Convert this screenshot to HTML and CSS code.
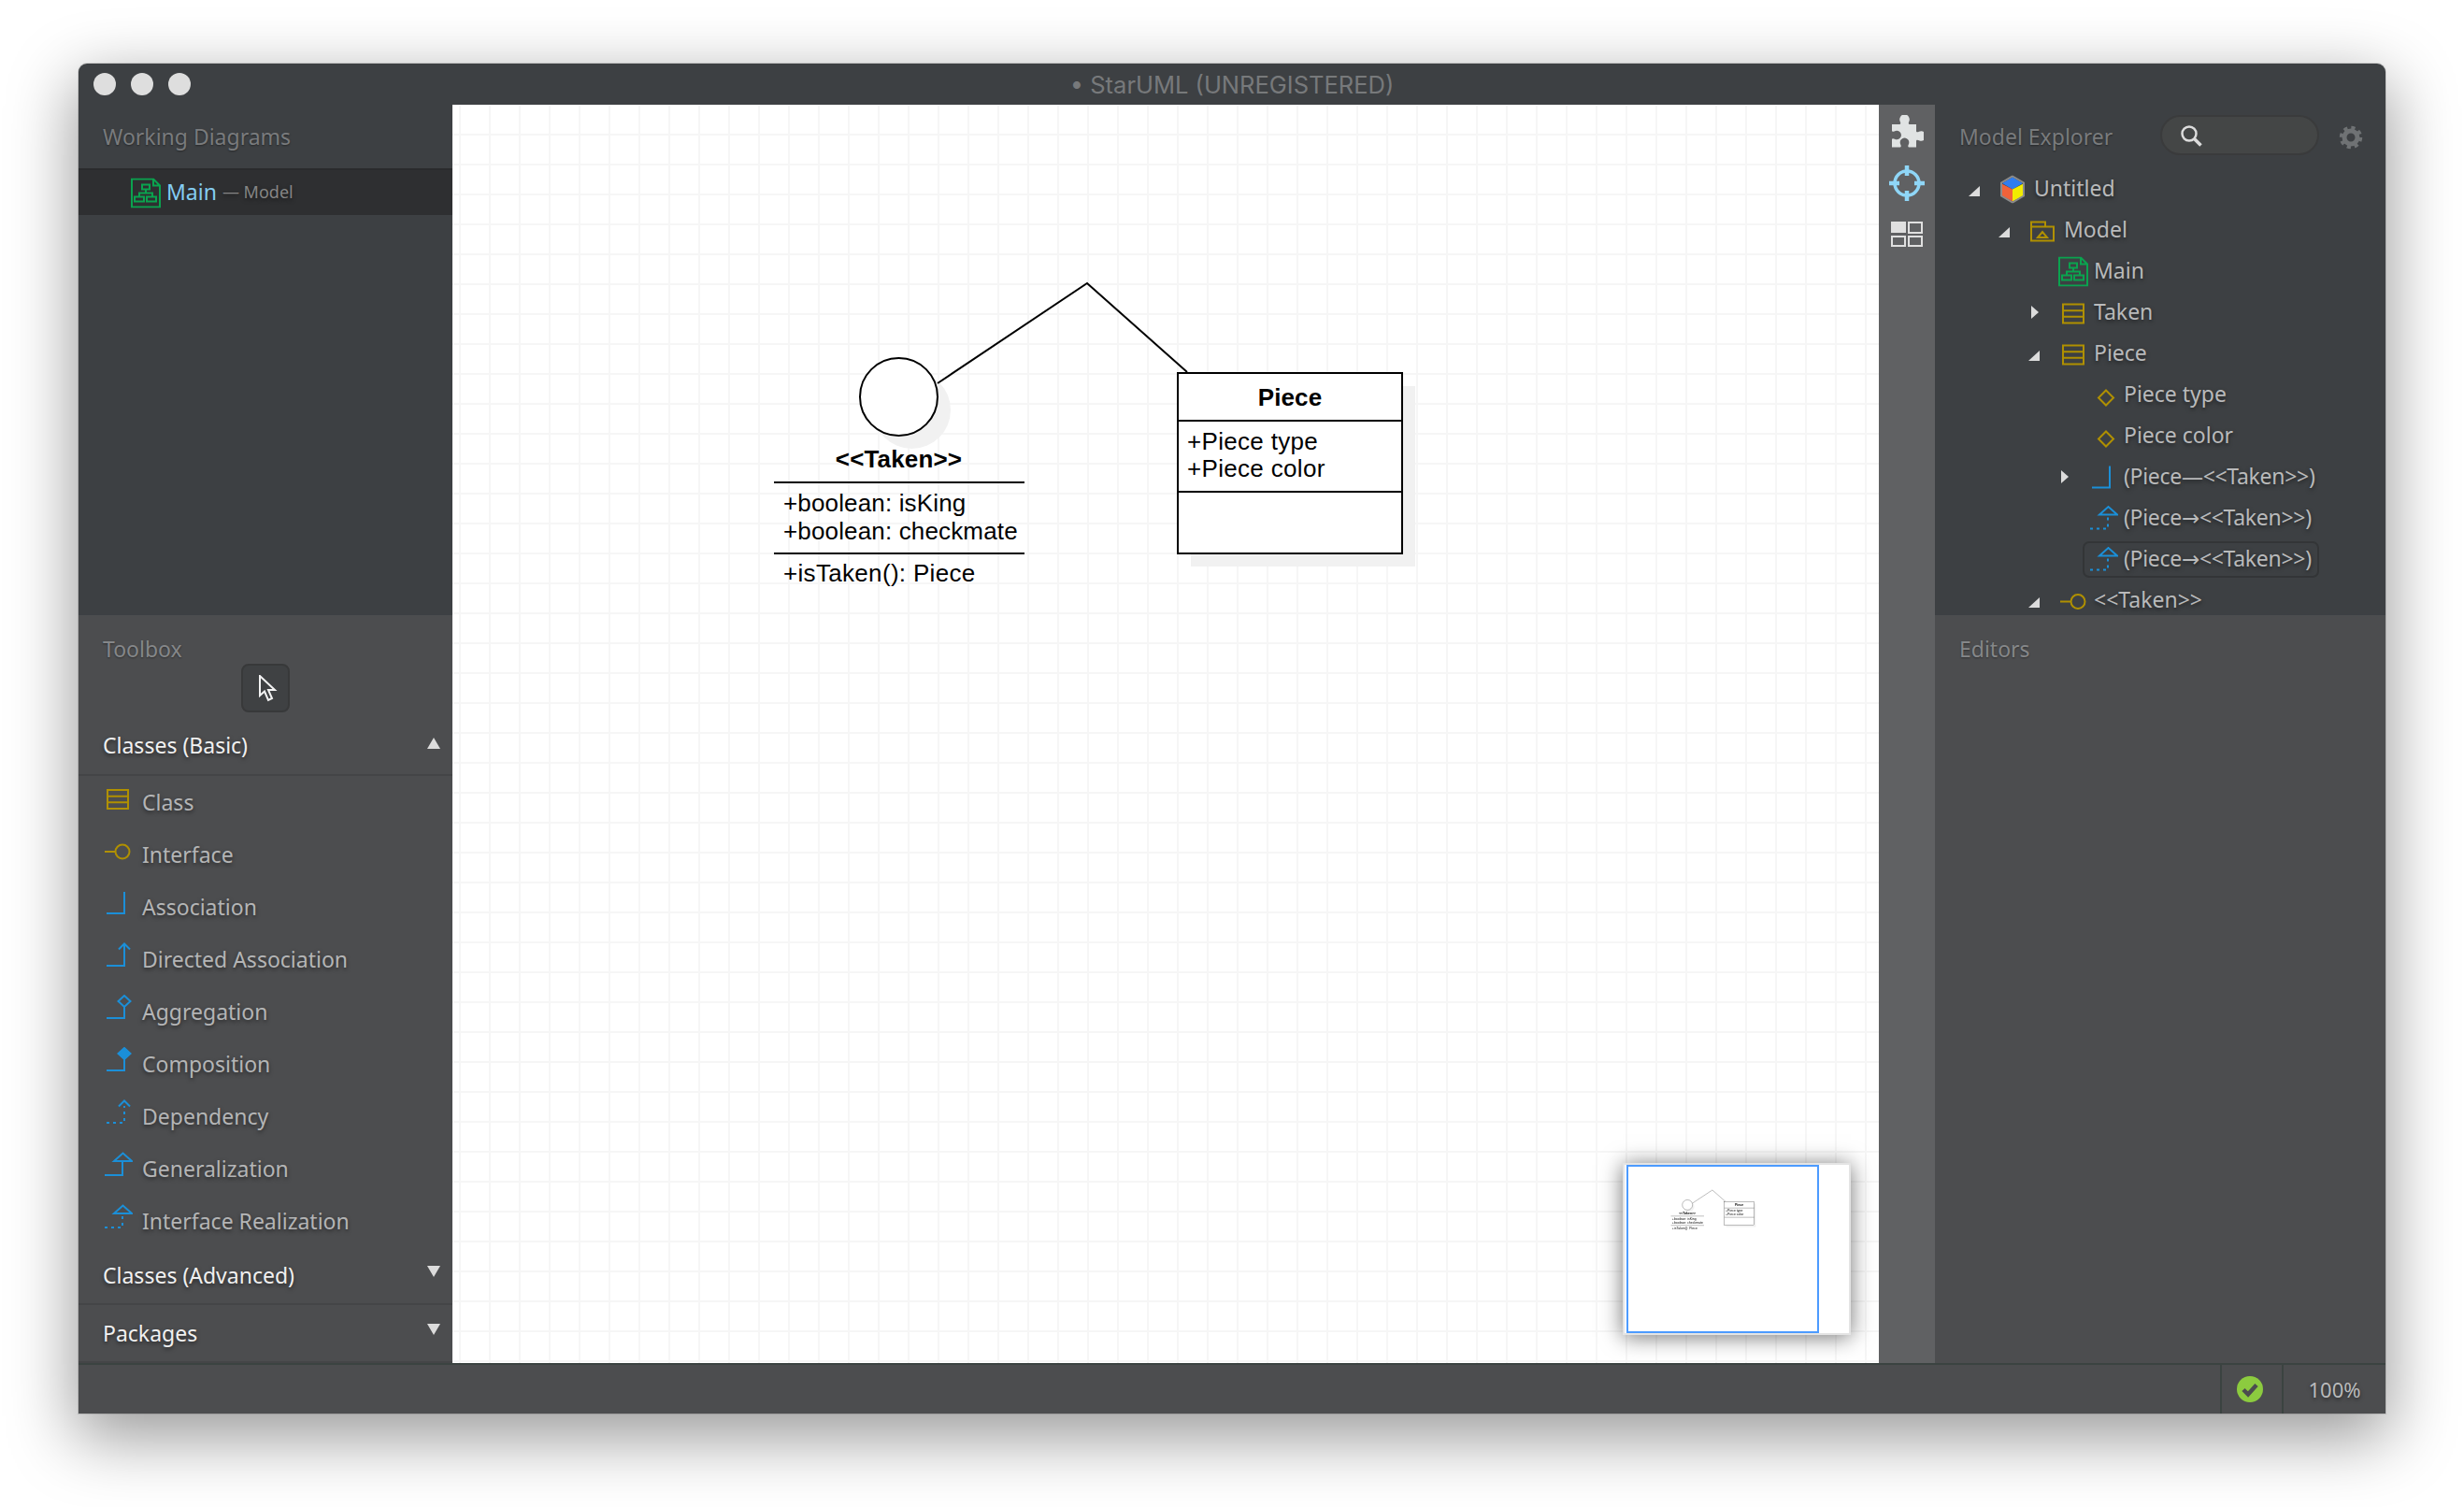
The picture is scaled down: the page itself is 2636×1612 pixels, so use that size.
FILE: index.html
```html
<!DOCTYPE html>
<html lang="en">
<head>
    <meta charset="UTF-8">
    <title>StarUML</title>
    <link rel="stylesheet" href="styles.css">
</head>
<body>

    <!-- Shared icons -->
    <svg class="defs" width="0" height="0">
        <symbol id="i-class" viewBox="0 0 30 30"><path class="gold" d="M3 5h22v20H3zM3 11.700h22M3 18.300h22"/></symbol>
        <symbol id="i-interface" viewBox="0 0 30 30"><path class="gold" d="M0 15h11"/><circle class="gold" cx="19" cy="15" r="7.500"/></symbol>
        <symbol id="i-assoc" viewBox="0 0 30 30"><path class="blue" d="M2 25h19V2"/></symbol>
        <symbol id="i-directed" viewBox="0 0 30 30"><path class="blue" d="M2 25h19V2M15 7.500l6-6 6 6"/></symbol>
        <symbol id="i-aggregation" viewBox="0 0 30 30"><path class="blue" d="M2 25h19V13M21 1l6.500 6-6.500 6-6.500-6z"/></symbol>
        <symbol id="i-composition" viewBox="0 0 30 30"><path class="blue" d="M2 25h19V13"/><path class="blue solid" d="M21 1l6.500 6-6.500 6-6.500-6z"/></symbol>
        <symbol id="i-dependency" viewBox="0 0 30 30"><path class="blue dots" d="M2 25h19V7"/><path class="blue" d="M15 7.500l6-6 6 6"/></symbol>
        <symbol id="i-general" viewBox="0 0 30 30"><path class="blue" d="M0 25h19V10M10 10h19L19.500 1.500z"/></symbol>
        <symbol id="i-realize" viewBox="0 0 30 30"><path class="blue dots" d="M0 25h19V10"/><path class="blue" d="M10 10h19L19.500 1.500z"/></symbol>
        <symbol id="i-attr" viewBox="0 0 30 30"><path class="gold" d="M17 7l8 8-8 8-8-8z"/></symbol>
        <symbol id="i-package" viewBox="0 0 30 30"><path class="gold" d="M1 10V5h15v5M1 10h24v15H1zM8 21.500l5-6 5 6z"/></symbol>
        <symbol id="i-diagram" viewBox="0 0 32 32"><path class="green" d="M1 1h23l7 7v23H1zM24 1v7h7M12 7h8v5h-8zM16 12v4M9 20v-4h14v4M4 20h10v5H4zM17 20h10v5H17z"/></symbol>
    </svg>

    <div class="window">

        <!-- Title Bar -->
        <header class="titlebar">
            <div class="lights"><span></span><span></span><span></span></div>
            <div class="title">• StarUML (UNREGISTERED)</div>
        </header>

        <div class="main">

            <!-- Left Sidebar -->
            <aside class="sidebar">
                <section class="working">
                    <div class="panel-title">Working Diagrams</div>
                    <div class="working-row">
                        <svg class="ic-diagram"><use href="#i-diagram"/></svg>
                        <span class="working-name">Main</span>
                        <span class="working-owner">— Model</span>
                    </div>
                </section>
                <section class="toolbox">
                    <div class="panel-title toolbox-title">Toolbox</div>
                    <div class="pointer-row">
                        <button class="pointer-btn">
                            <svg width="22" height="30" viewBox="0 0 22 30"><path d="M2 1v21l5-4.500 4 9.500 4-2-4-9h7z" fill="#3f4143" stroke="#f2f2f2" stroke-width="2"/></svg>
                        </button>
                    </div>
                    <div class="group-head first">Classes (Basic)<i class="tri-up"></i></div>
                    <ul class="tools">
                        <li><svg class="ic"><use href="#i-class"/></svg>Class</li>
                        <li><svg class="ic"><use href="#i-interface"/></svg>Interface</li>
                        <li><svg class="ic"><use href="#i-assoc"/></svg>Association</li>
                        <li><svg class="ic"><use href="#i-directed"/></svg>Directed Association</li>
                        <li><svg class="ic"><use href="#i-aggregation"/></svg>Aggregation</li>
                        <li><svg class="ic"><use href="#i-composition"/></svg>Composition</li>
                        <li><svg class="ic"><use href="#i-dependency"/></svg>Dependency</li>
                        <li><svg class="ic"><use href="#i-general"/></svg>Generalization</li>
                        <li><svg class="ic"><use href="#i-realize"/></svg>Interface Realization</li>
                    </ul>
                    <div class="group-head">Classes (Advanced)<i class="tri-down"></i></div>
                    <div class="group-head">Packages<i class="tri-down"></i></div>
                </section>
            </aside>

            <!-- Diagram Canvas -->
            <div class="canvas">
                <svg class="diagram" viewBox="484 112 1526 1346">
                    <g id="diagram">
                        <circle class="shade" cx="975.500" cy="438.500" r="41.500"/>
                        <rect class="shade" x="1274" y="413" width="240" height="193"/>
                        <path class="edge" d="M1003 410L1163 303L1270 398"/>
                        <circle class="node" cx="961.500" cy="424.500" r="41.500"/>
                        <text class="uml bold" x="961.500" y="500" text-anchor="middle">&lt;&lt;Taken&gt;&gt;</text>
                        <path class="edge" d="M828 516H1096M828 592H1096"/>
                        <text class="uml" x="838" y="547">+boolean: isKing</text>
                        <text class="uml" x="838" y="577">+boolean: checkmate</text>
                        <text class="uml wide" x="838" y="622">+isTaken(): Piece</text>
                        <rect class="node" x="1260" y="399" width="240" height="193"/>
                        <path class="edge" d="M1260 450H1500M1260 526H1500"/>
                        <text class="uml bold" x="1380" y="434" text-anchor="middle">Piece</text>
                        <text class="uml wide" x="1270" y="481">+Piece type</text>
                        <text class="uml wide" x="1270" y="510">+Piece color</text>
                    </g>
                </svg>
                <div class="minimap">
                    <div class="minimap-view">
                        <svg class="minimap-art" viewBox="484 112 1526 1346" preserveAspectRatio="none"><use href="#diagram"/></svg>
                    </div>
                </div>
            </div>

            <!-- Right Toolbar -->
            <div class="toolbar">
                <svg width="36" height="36" viewBox="0 0 36 36"><path fill="#e0e3e3" d="M2 10h8c1.500 0 1.500-1.500.7-3a5.300 5.300 0 1 1 9.600 0c-.8 1.500-.8 3 .7 3h7v7c0 1.500 1.500 1.500 3 .7a5.300 5.300 0 1 1 0 9.600c-1.500-.8-3-.8-3 .7v6.500h-7.500c-1.500 0-1.500-1.500-.7-3a4.800 4.800 0 1 0-8.600 0c.8 1.500.8 3-.7 3H2v-8c0-1.500 1.500-1.500 3-.7a4.800 4.800 0 1 0 0-8.600c-1.500.8-3 .8-3-.7z"/></svg>
                <svg width="38" height="38" viewBox="0 0 38 38"><g fill="none" stroke="#8fd6f7"><circle cx="19" cy="19" r="13" stroke-width="3.500"/><path d="M19 0v11M19 27v11M0 19h11M27 19h11" stroke-width="4.500"/></g></svg>
                <svg width="36" height="28" viewBox="0 0 36 28"><path fill="#e0e0e0" d="M1 1h16v12H1z"/><path fill="none" stroke="#e0e0e0" stroke-width="2" d="M20 2h14v11H20zM2 17h14v10H2zM20 17h14v10H20z"/></svg>
            </div>

            <!-- Right Sidebar -->
            <aside class="sidebar explorer">
                <section class="working">
                    <div class="explorer-head">
                        <div class="panel-title">Model Explorer</div>
                        <div class="search">
                            <svg width="26" height="26" viewBox="0 0 26 26"><g fill="none" stroke="#dcdcdc"><circle cx="10" cy="10" r="7.500" stroke-width="2.500"/><path d="M15.500 15.500l7 7" stroke-width="3.500"/></g></svg>
                        </div>
                        <svg class="gear" width="26" height="26" viewBox="0 0 26 26"><g fill="none" stroke="#6f7274"><circle cx="13" cy="13" r="7" stroke-width="5"/><circle cx="13" cy="13" r="10.500" stroke-width="3.500" stroke-dasharray="4.200 4.050"/></g></svg>
                    </div>
                    <ul class="tree">
                        <li class="level-0"><i class="caret open"></i>
                            <div class="node-label">
                                <svg class="ic cube" viewBox="0 0 30 30"><path fill="#2f7df0" d="M13 2l11 6.500-11 6.500L2 8.500z"/><path fill="#f0623a" d="M1.500 9L13 15v13L1.500 22z"/><path fill="#f2ec00" d="M24.500 9L13 15v13l11.500-6z"/><path fill="none" stroke="#8a8a8a" stroke-width="2" d="M13 1l12 7v14l-12 7-12-7V8z"/></svg>
                                Untitled
                            </div>
                        </li>
                        <li class="level-1"><i class="caret open"></i><div class="node-label"><svg class="ic"><use href="#i-package"/></svg>Model</div></li>
                        <li class="level-2"><i class="caret"></i><div class="node-label"><svg class="ic-diagram"><use href="#i-diagram"/></svg>Main</div></li>
                        <li class="level-2"><i class="caret closed"></i><div class="node-label"><svg class="ic"><use href="#i-class"/></svg>Taken</div></li>
                        <li class="level-2"><i class="caret open"></i><div class="node-label"><svg class="ic"><use href="#i-class"/></svg>Piece</div></li>
                        <li class="level-3"><i class="caret"></i><div class="node-label"><svg class="ic low"><use href="#i-attr"/></svg>Piece type</div></li>
                        <li class="level-3"><i class="caret"></i><div class="node-label"><svg class="ic low"><use href="#i-attr"/></svg>Piece color</div></li>
                        <li class="level-3"><i class="caret closed"></i><div class="node-label rel"><svg class="ic"><use href="#i-assoc"/></svg>(Piece—&lt;&lt;Taken&gt;&gt;)</div></li>
                        <li class="level-3"><i class="caret"></i><div class="node-label rel"><svg class="ic"><use href="#i-realize"/></svg>(Piece→&lt;&lt;Taken&gt;&gt;)</div></li>
                        <li class="level-3"><i class="caret"></i><div class="node-label rel selected"><svg class="ic"><use href="#i-realize"/></svg>(Piece→&lt;&lt;Taken&gt;&gt;)</div></li>
                        <li class="level-2"><i class="caret open"></i><div class="node-label"><svg class="ic"><use href="#i-interface"/></svg>&lt;&lt;Taken&gt;&gt;</div></li>
                    </ul>
                </section>
                <section class="editors">
                    <div class="panel-title">Editors</div>
                </section>
            </aside>
        </div>

        <!-- Status Bar -->
        <footer class="statusbar">
            <div class="status-cell status-check">
                <svg width="30" height="30" viewBox="0 0 30 30"><circle cx="15" cy="15" r="14" fill="#8ccb3f"/><path d="M8 15.500l5 5 9-10" fill="none" stroke="#4c4d4f" stroke-width="4.500"/></svg>
            </div>
            <div class="status-cell status-zoom">100%</div>
        </footer>
    </div>

</body>
</html>
```

FILE: styles.css
```css
/* General Body Styling */
html, body {
    margin: 0;
    padding: 0;
    height: 1612px;
    overflow: hidden;
    background: #fff;
}
body {
    padding: 68px 84px 0;
    box-sizing: border-box;
    font-family: 'Noto Sans', 'DejaVu Sans', sans-serif;
    font-size: 23px;
}
ul {
    list-style: none;
    margin: 0;
    padding: 0;
}
.defs {
    position: absolute;
}

/* Window */
.window {
    display: flex;
    flex-direction: column;
    height: 1444px;
    border-radius: 9px 9px 0 0;
    overflow: hidden;
    background: #3d4043;
    box-shadow: 0 22px 70px 4px rgba(0, 0, 0, 0.4), 0 0 0 1px rgba(0, 0, 0, 0.12);
}

/* Title Bar */
.titlebar {
    display: grid;
    grid-template-columns: 1fr auto 1fr;
    align-items: center;
    height: 44px;
    flex: none;
}
.lights {
    display: flex;
    gap: 16px;
    padding-left: 16px;
}
.lights span {
    width: 24px;
    height: 24px;
    border-radius: 50%;
    background: #dedede;
}
.title {
    font-family: 'Inter', 'Liberation Sans', sans-serif;
    font-size: 25.500px;
    color: #77797b;
}

/* Main Columns */
.main {
    display: grid;
    grid-template-columns: 400px 1526px 60px 482px;
    height: 1346px;
    flex: none;
}
.sidebar {
    display: flex;
    flex-direction: column;
    min-width: 0;
}
.working {
    height: 546px;
    flex: none;
    overflow: hidden;
    background: #3d4043;
}
.panel-title {
    box-sizing: border-box;
    height: 68px;
    padding: 18px 0 0 26px;
    color: #797b7d;
    text-shadow: 0 1px 2px rgba(0, 0, 0, 0.4);
}
.working-row {
    display: flex;
    align-items: center;
    box-sizing: border-box;
    height: 50px;
    padding: 0 0 3px 56px;
    background: #2e2f31;
    border-top: 2px solid #2a2b2d;
    color: #8c8c8c;
}
.working-row .ic-diagram {
    transform: translateY(1.500px);
}
.working-name {
    margin-left: 6px;
    color: #84cdf2;
}
.working-owner {
    margin-left: 6px;
    font-size: 18px;
    color: #858585;
    text-shadow: 0 2px 4px rgba(0, 0, 0, 0.5);
}

/* Toolbox */
.toolbox {
    flex: 1;
    background: #4c4d4f;
}
.toolbox-title {
    height: 52px;
    padding-top: 20px;
    color: #858789;
}
.pointer-row {
    display: flex;
    justify-content: center;
}
.pointer-btn {
    display: flex;
    align-items: center;
    justify-content: center;
    box-sizing: border-box;
    width: 52px;
    height: 52px;
    padding: 2px 0 0 6px;
    background: #3f4143;
    border: 2px solid #38393a;
    border-radius: 8px;
}
.group-head {
    position: relative;
    display: flex;
    align-items: center;
    box-sizing: border-box;
    height: 62px;
    padding-left: 26px;
    border-bottom: 2px solid #444547;
    color: #f0f0f0;
    text-shadow: 0 2px 4px rgba(0, 0, 0, 0.5);
}
.group-head.first {
    height: 68px;
    padding-top: 4px;
}
.tri-up, .tri-down {
    position: absolute;
    right: 13px;
    border-left: 7px solid transparent;
    border-right: 7px solid transparent;
}
.tri-up {
    top: 27px;
    border-bottom: 12px solid #dcdcdc;
}
.tri-down {
    top: 20px;
    border-top: 12px solid #dcdcdc;
}
.tools li {
    display: flex;
    align-items: center;
    height: 56px;
    padding-left: 28px;
    color: #b4b5b6;
    text-shadow: 0 2px 4px rgba(0, 0, 0, 0.5);
}
.tools .ic {
    margin: -6px 10px 0 0;
}

/* Icons */
.ic {
    width: 30px;
    height: 30px;
    flex: none;
}
.ic-diagram {
    width: 32px;
    height: 32px;
    flex: none;
}
.gold, .blue, .green {
    fill: none;
    stroke-width: 2;
}
.gold {
    stroke: #b09000;
}
.blue {
    stroke: #1b8fd8;
}
.green {
    stroke: #0aa34f;
}
.solid {
    fill: #1b8fd8;
}
.dots {
    stroke-dasharray: 3 4;
}

/* Diagram Canvas */
.canvas {
    position: relative;
    overflow: hidden;
    background-color: #fff;
    background-image:
        linear-gradient(90deg, #f6f6f6 2px, transparent 2px),
        linear-gradient(#f6f6f6 2px, transparent 2px);
    background-size: 32px 32px;
    background-position: 7px 31px;
}
.diagram {
    display: block;
    width: 100%;
    height: 100%;
}
.shade {
    fill: #f1f1f1;
}
.node {
    fill: #fff;
    stroke: #000;
    stroke-width: 2;
}
.edge {
    fill: none;
    stroke: #000;
    stroke-width: 2;
}
.uml {
    font-family: 'Liberation Sans', sans-serif;
    font-size: 26px;
    letter-spacing: 0.15px;
    fill: #000;
}
.uml.wide {
    letter-spacing: 0.32px;
}
.bold {
    font-weight: bold;
}
.minimap {
    position: absolute;
    top: 1132px;
    left: 1252px;
    box-sizing: border-box;
    width: 244px;
    height: 184px;
    padding: 0 0 0 2px;
    background: #fff;
    border: 2px solid #e4e4e4;
    box-shadow: 0 2px 22px rgba(0, 0, 0, 0.55);
}
.minimap-view {
    box-sizing: border-box;
    width: 206px;
    height: 180px;
    border: 2px solid #4d9bff;
}
.minimap-art {
    display: block;
    width: 100%;
    height: 100%;
    filter: blur(0.4px);
}

/* Right Toolbar */
.toolbar {
    display: flex;
    flex-direction: column;
    align-items: center;
    gap: 18px;
    padding-top: 11px;
    background: #606163;
}
.toolbar svg:last-child {
    margin-top: 3px;
}

/* Model Explorer */
.explorer-head {
    display: flex;
    align-items: flex-start;
    height: 68px;
}
.explorer-head .panel-title {
    width: 241px;
}
.search {
    box-sizing: border-box;
    width: 170px;
    height: 43px;
    margin-top: 11px;
    padding: 8px 0 0 19px;
    background: #444646;
    border: 2px solid #3a3b3c;
    border-radius: 22px;
}
.gear {
    margin: 22px 0 0 21px;
}
.tree li {
    display: flex;
    align-items: center;
    height: 44px;
    color: #b9babb;
    text-shadow: 0 2px 4px rgba(0, 0, 0, 0.5);
}
.level-0 { padding-left: 36px; }
.level-1 { padding-left: 68px; }
.level-2 { padding-left: 100px; }
.level-3 { padding-left: 132px; }
.caret {
    box-sizing: content-box;
    width: 34px;
    height: 0;
    flex: none;
}
.caret::before {
    content: '';
    display: block;
    width: 0;
}
.caret.open::before {
    border-left: 12px solid transparent;
    border-bottom: 11px solid #dcdcdc;
    margin-top: 1px;
    transform: translateY(-4px);
}
.caret.closed::before {
    margin-left: 3px;
    border-left: 8px solid #dcdcdc;
    border-top: 7.5px solid transparent;
    border-bottom: 7.5px solid transparent;
    transform: translateY(-7px);
}
.node-label {
    display: flex;
    align-items: center;
    box-sizing: border-box;
    height: 39px;
    margin-left: -8px;
    padding: 0 6px 3px;
    border: 2px solid transparent;
    border-radius: 7px;
}
.node-label.rel {
    letter-spacing: -0.3px;
}
.node-label.selected {
    border-color: #333537;
}
.node-label .ic {
    margin-right: 6px;
    transform: translateY(2.500px);
}
.node-label .ic.low {
    transform: translateY(4.500px);
}
.node-label .ic.cube {
    transform: translateY(1.500px);
}
.node-label .ic-diagram {
    margin: 0 6px 0 -2px;
    transform: translateY(1.500px);
}

/* Editors Panel */
.editors {
    flex: 1;
    background: #4c4d4f;
}
.editors .panel-title {
    padding-top: 20px;
    color: #858789;
}

/* Status Bar */
.statusbar {
    display: flex;
    justify-content: flex-end;
    flex: 1;
    background: #4c4d4f;
    border-top: 2px solid #3b4341;
}
.status-cell {
    display: flex;
    align-items: center;
    justify-content: center;
    border-left: 2px solid #3b4341;
}
.status-check {
    width: 60px;
    padding-right: 4px;
}
.status-zoom {
    width: 109px;
    color: #b9babb;
    font-size: 22px;
    text-shadow: 0 2px 4px rgba(0, 0, 0, 0.5);
}
```
